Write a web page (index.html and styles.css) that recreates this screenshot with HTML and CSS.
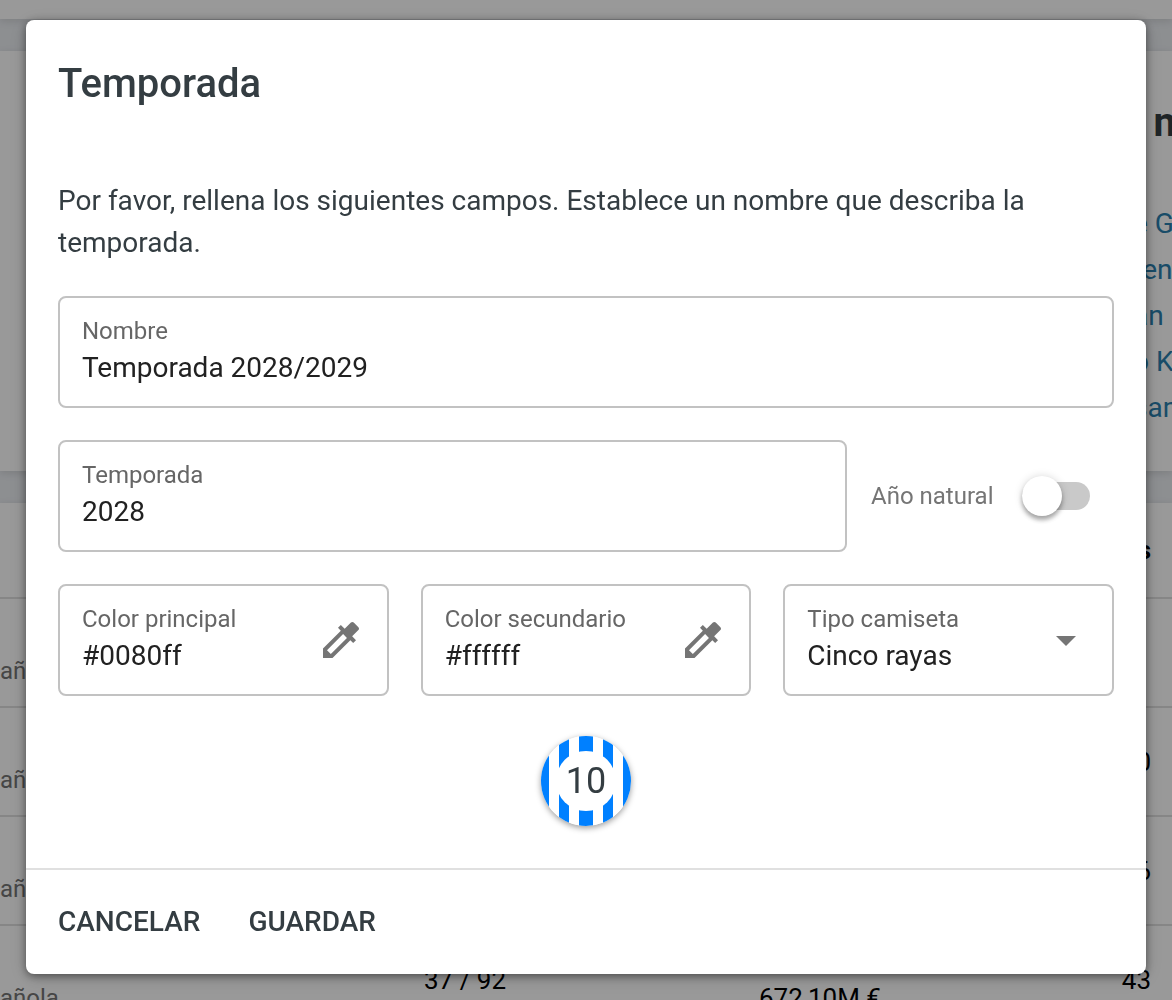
FILE: index.html
```html
<!DOCTYPE html>
<html lang="es">

<head>
    <meta charset="UTF-8">
    <meta name="viewport" content="width=device-width, initial-scale=1.0">
    <title>Temporada</title>
    <link rel="stylesheet" href="styles.css">
</head>

<body>
    <div class="page" aria-hidden="true">
        <div class="topbar"></div>

        <section class="card summary">
            <div class="summary-side">
                <h2>l n</h2>
                <ul>
                    <li><a href="#" tabindex="-1">e G</a></li>
                    <li><a href="#" tabindex="-1">ren</a></li>
                    <li><a href="#" tabindex="-1">an</a></li>
                    <li><a href="#" tabindex="-1">o K</a></li>
                    <li><a href="#" tabindex="-1">sam</a></li>
                </ul>
            </div>
        </section>

        <section class="card">
            <table class="teams">
                <thead>
                    <tr>
                        <th class="col-name"></th>
                        <th class="col-range"></th>
                        <th></th>
                        <th class="num">s</th>
                    </tr>
                </thead>
                <tbody>
                    <tr>
                        <td class="league">añola</td>
                        <td></td>
                        <td></td>
                        <td></td>
                    </tr>
                    <tr>
                        <td class="league">añola</td>
                        <td></td>
                        <td></td>
                        <td class="num">0</td>
                    </tr>
                    <tr>
                        <td class="league">añola</td>
                        <td></td>
                        <td></td>
                        <td class="num">6</td>
                    </tr>
                    <tr>
                        <td class="league">añola</td>
                        <td>37 / 92</td>
                        <td class="value">672,10M €</td>
                        <td class="num">43</td>
                    </tr>
                </tbody>
            </table>
        </section>
    </div>

    <!-- Diálogo de temporada -->
    <div class="overlay">
        <form class="dialog" role="dialog" aria-labelledby="dialogTitle">
            <div class="dialog-body">
                <h1 id="dialogTitle">Temporada</h1>
                <p>Por favor, rellena los siguientes campos. Establece un nombre que describa la temporada.</p>

                <div class="fields">
                    <div class="field">
                        <div class="field-text">
                            <label for="nombre">Nombre</label>
                            <input type="text" id="nombre" value="Temporada 2028/2029">
                        </div>
                    </div>

                    <div class="row">
                        <div class="field">
                            <div class="field-text">
                                <label for="temporada">Temporada</label>
                                <input type="text" id="temporada" value="2028">
                            </div>
                        </div>
                        <div class="toggle">
                            <label for="natural">Año natural</label>
                            <input type="checkbox" id="natural" role="switch">
                        </div>
                    </div>

                    <div class="columns">
                        <div class="field">
                            <div class="field-text">
                                <label for="principal">Color principal</label>
                                <input type="text" id="principal" value="#0080ff">
                            </div>
                            <button type="button" class="picker" aria-label="Elegir color principal">
                                <svg viewBox="0 0 24 24"><path d="M20.71 5.63l-2.34-2.34c-.39-.39-1.02-.39-1.41 0l-3.12 3.12-1.93-1.91-1.41 1.41 1.42 1.42L3 16.25V21h4.75l8.92-8.92 1.42 1.42 1.41-1.41-1.92-1.92 3.12-3.12c.4-.4.4-1.03.01-1.42zM6.92 19L5 17.08l8.06-8.06 1.92 1.92L6.92 19z"/></svg>
                            </button>
                        </div>
                        <div class="field">
                            <div class="field-text">
                                <label for="secundario">Color secundario</label>
                                <input type="text" id="secundario" value="#ffffff">
                            </div>
                            <button type="button" class="picker" aria-label="Elegir color secundario">
                                <svg viewBox="0 0 24 24"><path d="M20.71 5.63l-2.34-2.34c-.39-.39-1.02-.39-1.41 0l-3.12 3.12-1.93-1.91-1.41 1.41 1.42 1.42L3 16.25V21h4.75l8.92-8.92 1.42 1.42 1.41-1.41-1.92-1.92 3.12-3.12c.4-.4.4-1.03.01-1.42zM6.92 19L5 17.08l8.06-8.06 1.92 1.92L6.92 19z"/></svg>
                            </button>
                        </div>
                        <div class="field">
                            <div class="field-text">
                                <label for="camiseta">Tipo camiseta</label>
                                <select id="camiseta">
                                    <option selected>Cinco rayas</option>
                                </select>
                            </div>
                            <svg class="arrow" viewBox="0 0 24 24"><path d="M7 10l5 5 5-5z"/></svg>
                        </div>
                    </div>
                </div>

                <div class="shirt"><span>10</span></div>
            </div>

            <div class="dialog-actions">
                <button type="button">CANCELAR</button>
                <button type="submit">GUARDAR</button>
            </div>
        </form>
    </div>
</body>

</html>
```
FILE: styles.css
```css
* {
    box-sizing: border-box;
}

body {
    margin: 0;
    height: 100vh;
    overflow: hidden;
    background-color: #ebeef2;
    color: #343d42;
    font-family: Roboto, sans-serif;
    font-size: 28px;
}

h1,
h2,
p,
ul {
    margin: 0;
    padding: 0;
}

input,
select,
button {
    margin: 0;
    padding: 0;
    border: none;
    background: none;
    font: inherit;
    color: inherit;
}

button {
    cursor: pointer;
}

/* Página de fondo */
.page {
    display: flex;
    flex-direction: column;
    gap: 32px;
}

.topbar {
    height: 19px;
    background-color: #fff;
    box-shadow: 0 2px 8px rgba(0, 0, 0, 0.12);
}

.card {
    background-color: #fff;
    box-shadow: 0 2px 8px rgba(0, 0, 0, 0.12);
}

.summary {
    display: flex;
    justify-content: flex-end;
    height: 420px;
    padding-top: 48px;
}

.summary-side {
    width: 39px;
    white-space: nowrap;
}

.summary-side h2 {
    margin-bottom: 54px;
    font-size: 40px;
    font-weight: 700;
    line-height: 48px;
}

.summary-side ul {
    list-style: none;
}

.summary-side li {
    line-height: 46px;
}

.summary-side a {
    color: #2a7fae;
    text-decoration: none;
}

.teams {
    width: 100%;
    border-collapse: collapse;
    table-layout: fixed;
    color: #000;
    font-size: 26px;
    line-height: 30px;
}

.teams th,
.teams td {
    height: 109px;
    padding: 0;
    border-bottom: 2px solid #e0e0e0;
    text-align: left;
}

.teams th {
    height: 95px;
}

.teams .col-name {
    width: 424px;
}

.teams .col-range {
    width: 335px;
}

.teams .league,
.teams .value {
    padding-bottom: 20px;
    vertical-align: bottom;
}

.teams .league {
    color: #757575;
    font-size: 24px;
}

.teams .num {
    padding-right: 21px;
    text-align: right;
}

/* Diálogo */
.overlay {
    position: fixed;
    inset: 0;
    padding: 20px 26px;
    background-color: rgba(0, 0, 0, 0.4);
}

.dialog {
    border-radius: 8px;
    background-color: #fff;
    box-shadow: 0 2px 8px rgba(0, 0, 0, 0.45), 0 4px 20px rgba(0, 0, 0, 0.15);
}

.dialog-body {
    padding: 40px 32px 42px;
}

.dialog h1 {
    margin-bottom: 72px;
    font-size: 40px;
    font-weight: 500;
    line-height: 48px;
}

.dialog p {
    line-height: 42px;
}

.fields {
    display: flex;
    flex-direction: column;
    gap: 32px;
    margin-top: 32px;
}

.row {
    display: flex;
}

.row .field {
    flex: 1;
}

.columns {
    display: grid;
    grid-template-columns: repeat(3, 1fr);
    gap: 32px;
}

.field {
    display: flex;
    align-items: center;
    height: 112px;
    padding: 0 22px;
    border: 2px solid #c2c2c2;
    border-radius: 8px;
}

.field-text {
    flex: 1;
    min-width: 0;
    padding-bottom: 2px;
}

.field label {
    display: block;
    color: #666;
    font-size: 24px;
    line-height: 32px;
    white-space: nowrap;
}

.field input,
.field select {
    display: block;
    width: 100%;
    height: 40px;
    appearance: none;
    outline: none;
    color: #212121;
}

.picker {
    display: block;
    width: 48px;
    height: 48px;
}

.picker svg,
.arrow {
    display: block;
    width: 48px;
    height: 48px;
    fill: #757575;
}

.toggle {
    display: flex;
    align-items: center;
    gap: 20px;
    padding: 0 24px;
    color: #757575;
    font-size: 24px;
}

.toggle label {
    min-width: 131px;
}

.toggle input {
    position: relative;
    width: 68px;
    height: 28px;
    border-radius: 14px;
    appearance: none;
    background-color: #c9c9c9;
    cursor: pointer;
}

.toggle input::before {
    content: "";
    position: absolute;
    top: -6px;
    left: 0;
    width: 40px;
    height: 40px;
    border-radius: 50%;
    background-color: #fff;
    box-shadow: 0 4px 4px rgba(0, 0, 0, 0.3), 0 0 8px rgba(0, 0, 0, 0.15);
}

.toggle input:checked::before {
    left: 28px;
}

/* Camiseta de cinco rayas con el dorsal en el centro */
.shirt {
    display: flex;
    align-items: center;
    justify-content: center;
    width: 90px;
    height: 90px;
    margin: 40px auto 0;
    border-radius: 50%;
    background: linear-gradient(90deg,
        #0080ff 8px, #fff 8px 18px,
        #0080ff 18px 28px, #fff 28px 38px,
        #0080ff 38px 52px, #fff 52px 62px,
        #0080ff 62px 72px, #fff 72px 82px,
        #0080ff 82px);
    box-shadow: 0 2px 6px rgba(0, 0, 0, 0.4);
}

.shirt span {
    width: 60px;
    border-radius: 50%;
    background-color: #fff;
    font-size: 36px;
    line-height: 60px;
    text-align: center;
}

.dialog-actions {
    display: flex;
    align-items: center;
    gap: 48px;
    height: 106px;
    padding: 0 32px;
    border-top: 2px solid #e0e0e0;
}

.dialog-actions button {
    font-weight: 500;
    line-height: 40px;
}
```
